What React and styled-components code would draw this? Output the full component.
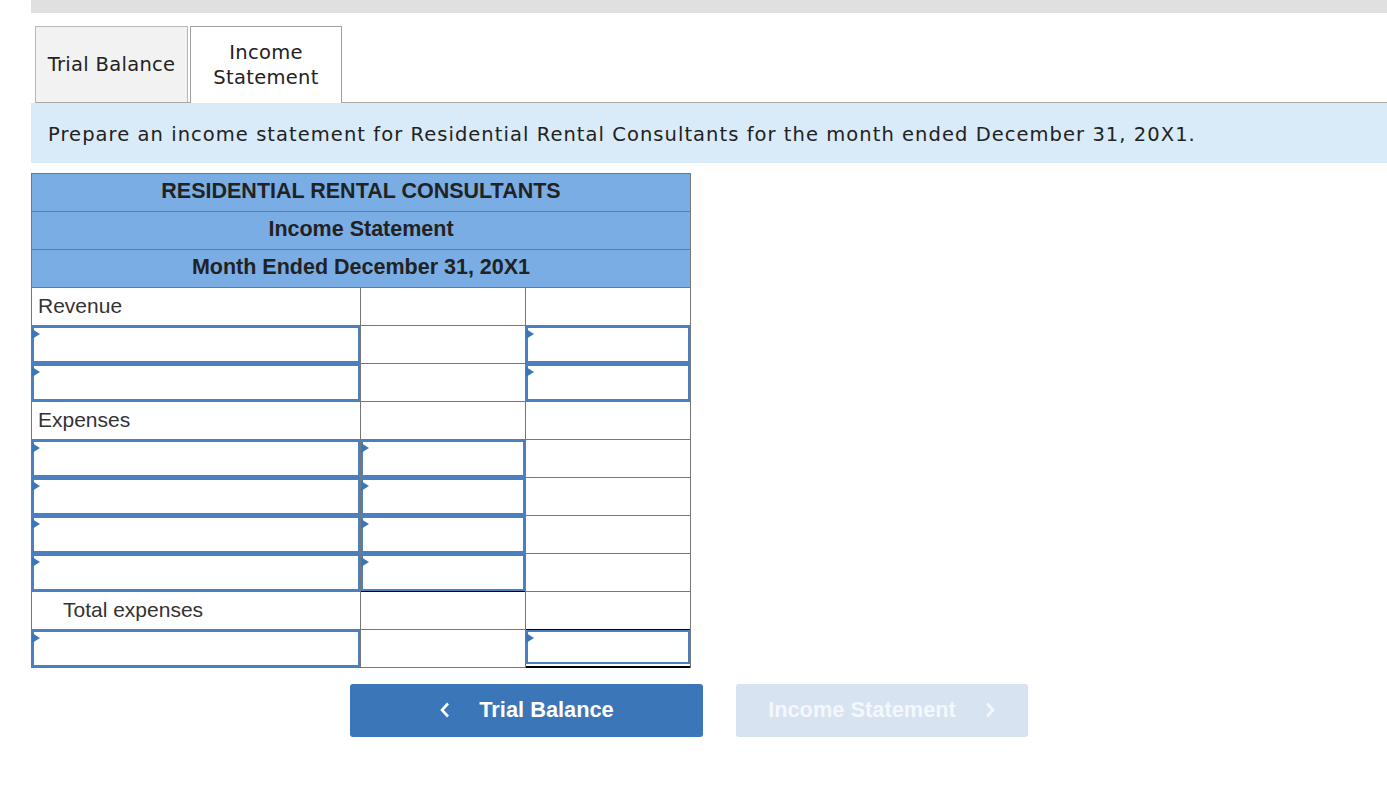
import styled, { createGlobalStyle } from 'styled-components';

const Global = createGlobalStyle`
   body {
      margin: 0;
      background: #fff;
      font-family: 'Liberation Sans', Arial, sans-serif;
   }
`;

const Page = styled.div`
   padding-left: 31px;
`;

const TopBar = styled.div`
   height: 13px;
   background: #e0e0e0;
`;

const TabStrip = styled.div`
   display: flex;
   align-items: flex-start;
   gap: 2px;
   margin: 13px 0 0 4px;
   height: 76px;
   border-bottom: 1px solid #a9a9a9;
`;

const Tab = styled.div`
   box-sizing: border-box;
   width: ${(p) => p.$w}px;
   height: ${(p) => (p.$active ? 77 : 76)}px;
   border: 1px solid ${(p) => (p.$active ? '#a0a0a0' : '#b8b8b8')};
   border-bottom: none;
   background: ${(p) => (p.$active ? '#fff' : '#f2f2f2')};
   display: flex;
   align-items: center;
   justify-content: center;
   text-align: center;
   font-family: 'DejaVu Sans', Verdana, sans-serif;
   font-size: 19.5px;
   letter-spacing: 0.3px;
   line-height: 25px;
   color: #222;
   position: relative;
   z-index: 1;
`;

const Prompt = styled.div`
   height: 60px;
   background: #d9eaf8;
   display: flex;
   align-items: center;
   padding: 2px 0 0 17px;
   box-sizing: border-box;
   font-family: 'DejaVu Sans', Verdana, sans-serif;
   font-size: 19.5px;
   letter-spacing: 1.05px;
   color: #222;
`;

const Sheet = styled.div`
   margin-top: 10px;
   display: grid;
   grid-template-columns: 328px 164px 164px;
   grid-auto-rows: 37px;
   gap: 1px;
   width: fit-content;
   background: #777;
   border: 1px solid #777;
`;

const HeadCell = styled.div`
   grid-column: 1 / -1;
   background: #7aade4;
   display: flex;
   align-items: center;
   justify-content: center;
   padding-bottom: 3px;
   font-weight: bold;
   font-size: 21.5px;
   color: #222;
`;

const Cell = styled.div`
   position: relative;
   background: #fff;
   display: flex;
   align-items: center;
   padding: 0 0 2px ${(p) => p.$indent || 6}px;
   font-size: 21px;
   color: #333;
   box-shadow: ${(p) =>
      p.$double
         ? '0 -1px 0 #000, 0 1px 0 #000, inset 0 -1px 0 #000'
         : p.$under
         ? '0 1px 0 #000'
         : 'none'};
`;

const Entry = styled.input`
   box-sizing: border-box;
   position: absolute;
   left: 0;
   top: 0;
   width: 100%;
   height: ${(p) => (p.$double ? 'calc(100% - 3px)' : '100%')};
   margin: 0;
   border: 2px solid #4a7fc1;
   background: #fff;
   outline: none;
   font-size: 18px;
   font-family: 'Liberation Sans', Arial, sans-serif;
`;

const Marker = styled.span`
   position: absolute;
   left: 0;
   top: 3px;
   width: 0;
   height: 0;
   border-top: 5px solid transparent;
   border-bottom: 5px solid transparent;
   border-left: 8px solid #3a76b8;
   z-index: 1;
`;

const NavRow = styled.div`
   display: flex;
   gap: 33px;
   margin: 16px 0 0 319px;
`;

const NavButton = styled.button`
   box-sizing: border-box;
   width: ${(p) => p.$w}px;
   height: 53px;
   border: none;
   border-radius: 3px;
   background: ${(p) => (p.$off ? '#d7e3f1' : '#3a76b8')};
   color: ${(p) => (p.$off ? '#f4f7fb' : '#fff')};
   font-family: 'Liberation Sans', Arial, sans-serif;
   font-weight: bold;
   font-size: 21.8px;
   padding: 0 0 2px;
   display: flex;
   align-items: center;
   justify-content: center;
   gap: 28px;
   cursor: ${(p) => (p.$off ? 'default' : 'pointer')};
`;

const Chevron = ({ dir }) => (
   <svg width="12" height="16" viewBox="0 0 12 16">
      <polyline
         points={dir === 'left' ? '9,1.5 3,8 9,14.5' : '3,1.5 9,8 3,14.5'}
         fill="none"
         stroke="currentColor"
         strokeWidth="2.6"
      />
   </svg>
);

const Field = ({ double }) => (
   <Cell $double={double}>
      <Entry $double={double} />
      <Marker />
   </Cell>
);

const rows = [
   ['label', 'Revenue'],
   ['rev'],
   ['rev'],
   ['label', 'Expenses'],
   ['exp'],
   ['exp'],
   ['exp'],
   ['exp', 'last'],
   ['total', 'Total expenses'],
   ['net'],
];

const App = () => {
   return (
      <Page>
         <Global />
         <TopBar />
         <TabStrip>
            <Tab $w={153}>Trial Balance</Tab>
            <Tab $w={152} $active>
               Income
               <br />
               Statement
            </Tab>
         </TabStrip>
         <Prompt>
            Prepare an income statement for Residential Rental Consultants for the month ended December 31, 20X1.
         </Prompt>
         <Sheet>
            <HeadCell>RESIDENTIAL RENTAL CONSULTANTS</HeadCell>
            <HeadCell>Income Statement</HeadCell>
            <HeadCell>Month Ended December 31, 20X1</HeadCell>
            {rows.map(([kind, text], i) => {
               if (kind === 'label' || kind === 'total') {
                  return [
                     <Cell key={i + 'a'} $indent={kind === 'total' ? 31 : 6}>
                        {text}
                     </Cell>,
                     <Cell key={i + 'b'} />,
                     <Cell key={i + 'c'} />,
                  ];
               }
               if (kind === 'rev') {
                  return [
                     <Field key={i + 'a'} />,
                     <Cell key={i + 'b'} />,
                     <Field key={i + 'c'} />,
                  ];
               }
               if (kind === 'exp') {
                  return [
                     <Field key={i + 'a'} />,
                     text === 'last' ? (
                        <Cell key={i + 'b'} $under>
                           <Entry />
                           <Marker />
                        </Cell>
                     ) : (
                        <Field key={i + 'b'} />
                     ),
                     <Cell key={i + 'c'} />,
                  ];
               }
               return [
                  <Field key={i + 'a'} />,
                  <Cell key={i + 'b'} />,
                  <Field key={i + 'c'} double />,
               ];
            })}
         </Sheet>
         <NavRow>
            <NavButton $w={353}>
               <Chevron dir="left" />
               Trial Balance
            </NavButton>
            <NavButton $w={292} $off>
               Income Statement
               <Chevron dir="right" />
            </NavButton>
         </NavRow>
      </Page>
   );
};

export default App;
